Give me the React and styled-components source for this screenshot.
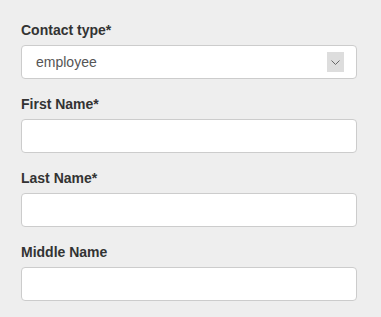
import React from 'react';
import styled, { createGlobalStyle } from 'styled-components';

const GlobalStyle = createGlobalStyle`
  html, body {
    margin: 0;
    padding: 0;
    background: #eeeeee;
  }
  body {
    font-family: "Liberation Sans", Arial, sans-serif;
  }
`;

const Form = styled.form`
  width: 336px;
  padding: 20px 24px 0 21px;
  display: flex;
  flex-direction: column;
  gap: 15px;
`;

const Field = styled.div`
  display: flex;
  flex-direction: column;
  gap: 5px;
`;

const Label = styled.label`
  font-size: 14px;
  line-height: 20px;
  font-weight: bold;
  color: #333333;
`;

const TextInput = styled.input`
  box-sizing: border-box;
  width: 100%;
  height: 34px;
  margin: 0;
  padding: 0 13px;
  border: 1px solid #cccccc;
  border-radius: 4px;
  background: #ffffff;
  font-family: inherit;
  font-size: 14px;
  color: #555555;
  outline: none;
`;

const SelectBox = styled.div`
  box-sizing: border-box;
  height: 34px;
  padding: 0 12px 0 14px;
  display: flex;
  align-items: center;
  justify-content: space-between;
  border: 1px solid #cccccc;
  border-radius: 4px;
  background: #ffffff;
  font-size: 14px;
  color: #555555;
`;

const ArrowBox = styled.span`
  width: 17px;
  height: 20px;
  display: flex;
  align-items: center;
  justify-content: center;
  background: #dddddd;
`;

const fields = [
  { label: 'First Name', required: true },
  { label: 'Last Name', required: true },
  { label: 'Middle Name', required: false },
];

const App = () => (
  <>
    <GlobalStyle />
    <Form>
      <Field>
        <Label>Contact type*</Label>
        <SelectBox>
          <span>employee</span>
          <ArrowBox>
            <svg width="9" height="5" viewBox="0 0 9 5">
              <path d="M0.5 0.5 L4.5 4.5 L8.5 0.5" fill="none" stroke="#666" strokeWidth="1" />
            </svg>
          </ArrowBox>
        </SelectBox>
      </Field>
      {fields.map(f => (
        <Field key={f.label}>
          <Label>{f.label}{f.required && '*'}</Label>
          <TextInput type="text" />
        </Field>
      ))}
    </Form>
  </>
);

export default App;
